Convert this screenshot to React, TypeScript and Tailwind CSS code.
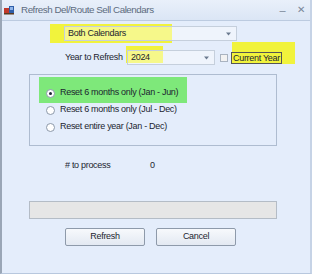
import React from "react";

const ComboArrow = () => (
  <svg width="7" height="4" viewBox="0 0 7 4" className="shrink-0">
    <path d="M1 0.5 L3.5 3.5 L6 0.5 Z" fill="#6b7a8f" />
  </svg>
);

const Radio = ({ checked }: { checked?: boolean }) => (
  <span className="w-[9px] h-[9px] rounded-full border border-[#8c99aa] bg-white flex items-center justify-center shrink-0">
    {checked && <span className="w-[3px] h-[3px] rounded-full bg-[#1b2633]" />}
  </span>
);

const AppIcon = () => (
  <svg width="11" height="10" viewBox="0 0 11 10">
    <rect x="0" y="3" width="6" height="6" fill="#c0392b" />
    <rect x="5" y="1" width="5" height="8" fill="#2f5ea8" />
    <rect x="6" y="2" width="3" height="3" fill="#8fb4e8" />
    <rect x="0" y="8" width="10" height="1.5" fill="#5a3a20" />
  </svg>
);

export default function App() {
  const options = [
    { label: "Reset 6 months only (Jan - Jun)", checked: true },
    { label: "Reset 6 months only (Jul - Dec)", checked: false },
    { label: "Reset entire year (Jan - Dec)", checked: false },
  ];

  return (
    <div
      className="w-[312px] h-[274px] flex flex-col bg-[#e4edfb] border-l-2 border-r-2 border-b border-l-[#9aa6b6] border-r-[#c6d3e6] border-b-[#b8c8de] text-[9px] tracking-[-0.3px] text-[#1c2530] overflow-hidden whitespace-nowrap"
      style={{ fontFamily: '"Liberation Sans", Arial, sans-serif' }}
    >
      {/* title bar */}
      <div className="h-[21px] shrink-0 flex items-center pl-[2px] pr-[5px] bg-gradient-to-b from-[#e9f0fa] to-[#dbe6f5] border-b border-[#bccbe0]">
        <AppIcon />
        <span className="ml-[6px] text-[9.8px] text-[#5d6b7e] tracking-[-0.45px]">Refresh Del/Route Sell Calendars</span>
        <span className="ml-auto text-[11px] text-[#7a8798] leading-none">–</span>
        <span className="ml-[12px] text-[10px] text-[#7a8798] leading-none">✕</span>
      </div>

      {/* body */}
      <div className="relative flex-1">
        {/* annotation highlights */}
        <div className="absolute left-[48px] top-[3px] w-[122px] h-[19px] bg-[#f3f31a]/85" />
        <div className="absolute left-[124px] top-[25px] w-[37px] h-[17px] bg-[#f3f31a]/85" />
        <div className="absolute left-[230px] top-[21px] w-[63px] h-[22px] bg-[#f3f31a]/85" />
        <div className="absolute left-[37px] top-[56px] w-[148px] h-[26px] bg-[#7ee87a]" />

        <div className="relative flex flex-col">
          {/* calendar select */}
          <div className="pl-[62px] pt-[5px]">
            <div className="w-[173px] h-[15px] border border-[#c5cfdc] bg-white/40 flex items-center pl-[3px] pr-[4px]">
              <span>Both Calendars</span>
              <span className="ml-auto"><ComboArrow /></span>
            </div>
          </div>

          {/* year row */}
          <div className="mt-[9px] flex items-center pl-[63px] h-[15px]">
            <span className="w-[62px]">Year to Refresh</span>
            <div className="w-[88px] h-[15px] border border-[#c5cfdc] bg-white/40 flex items-center pl-[3px] pr-[4px]">
              <span>2024</span>
              <span className="ml-auto"><ComboArrow /></span>
            </div>
            <span className="ml-[5px] w-[8px] h-[8px] border border-[#a9b3c0] bg-[#f2f2f2]" />
            <span className="ml-[3px] px-[1px] border border-[#555] leading-[10px]">Current Year</span>
          </div>

          {/* group box */}
          <div className="mt-[9px] ml-[27px] w-[248px] h-[72px] border border-[#aebcd0] flex flex-col pt-[13px] pl-[16px] gap-[7px]">
            {options.map((o) => (
              <div key={o.label} className="flex items-center gap-[5px] h-[10px]">
                <Radio checked={o.checked} />
                <span>{o.label}</span>
              </div>
            ))}
          </div>

          {/* count */}
          <div className="mt-[13px] flex items-center pl-[63px]">
            <span className="w-[85px]">#&nbsp;to process</span>
            <span>0</span>
          </div>

          {/* progress bar */}
          <div className="mt-[28px] ml-[27px] w-[248px] h-[18px] border border-[#b4bcc6] bg-[#e6e6e6]" />

          {/* buttons */}
          <div className="mt-[9px] flex pl-[63px] gap-[11px]">
            <button className="w-[80px] h-[18px] border border-[#8e9aaa] rounded-[2px] bg-gradient-to-b from-[#f7f9fc] to-[#e3e9f2] text-[9px] tracking-[-0.3px] text-[#1c2530]">
              Refresh
            </button>
            <button className="w-[80px] h-[18px] border border-[#8e9aaa] rounded-[2px] bg-gradient-to-b from-[#f7f9fc] to-[#e3e9f2] text-[9px] tracking-[-0.3px] text-[#1c2530]">
              Cancel
            </button>
          </div>
        </div>
      </div>
    </div>
  );
}
